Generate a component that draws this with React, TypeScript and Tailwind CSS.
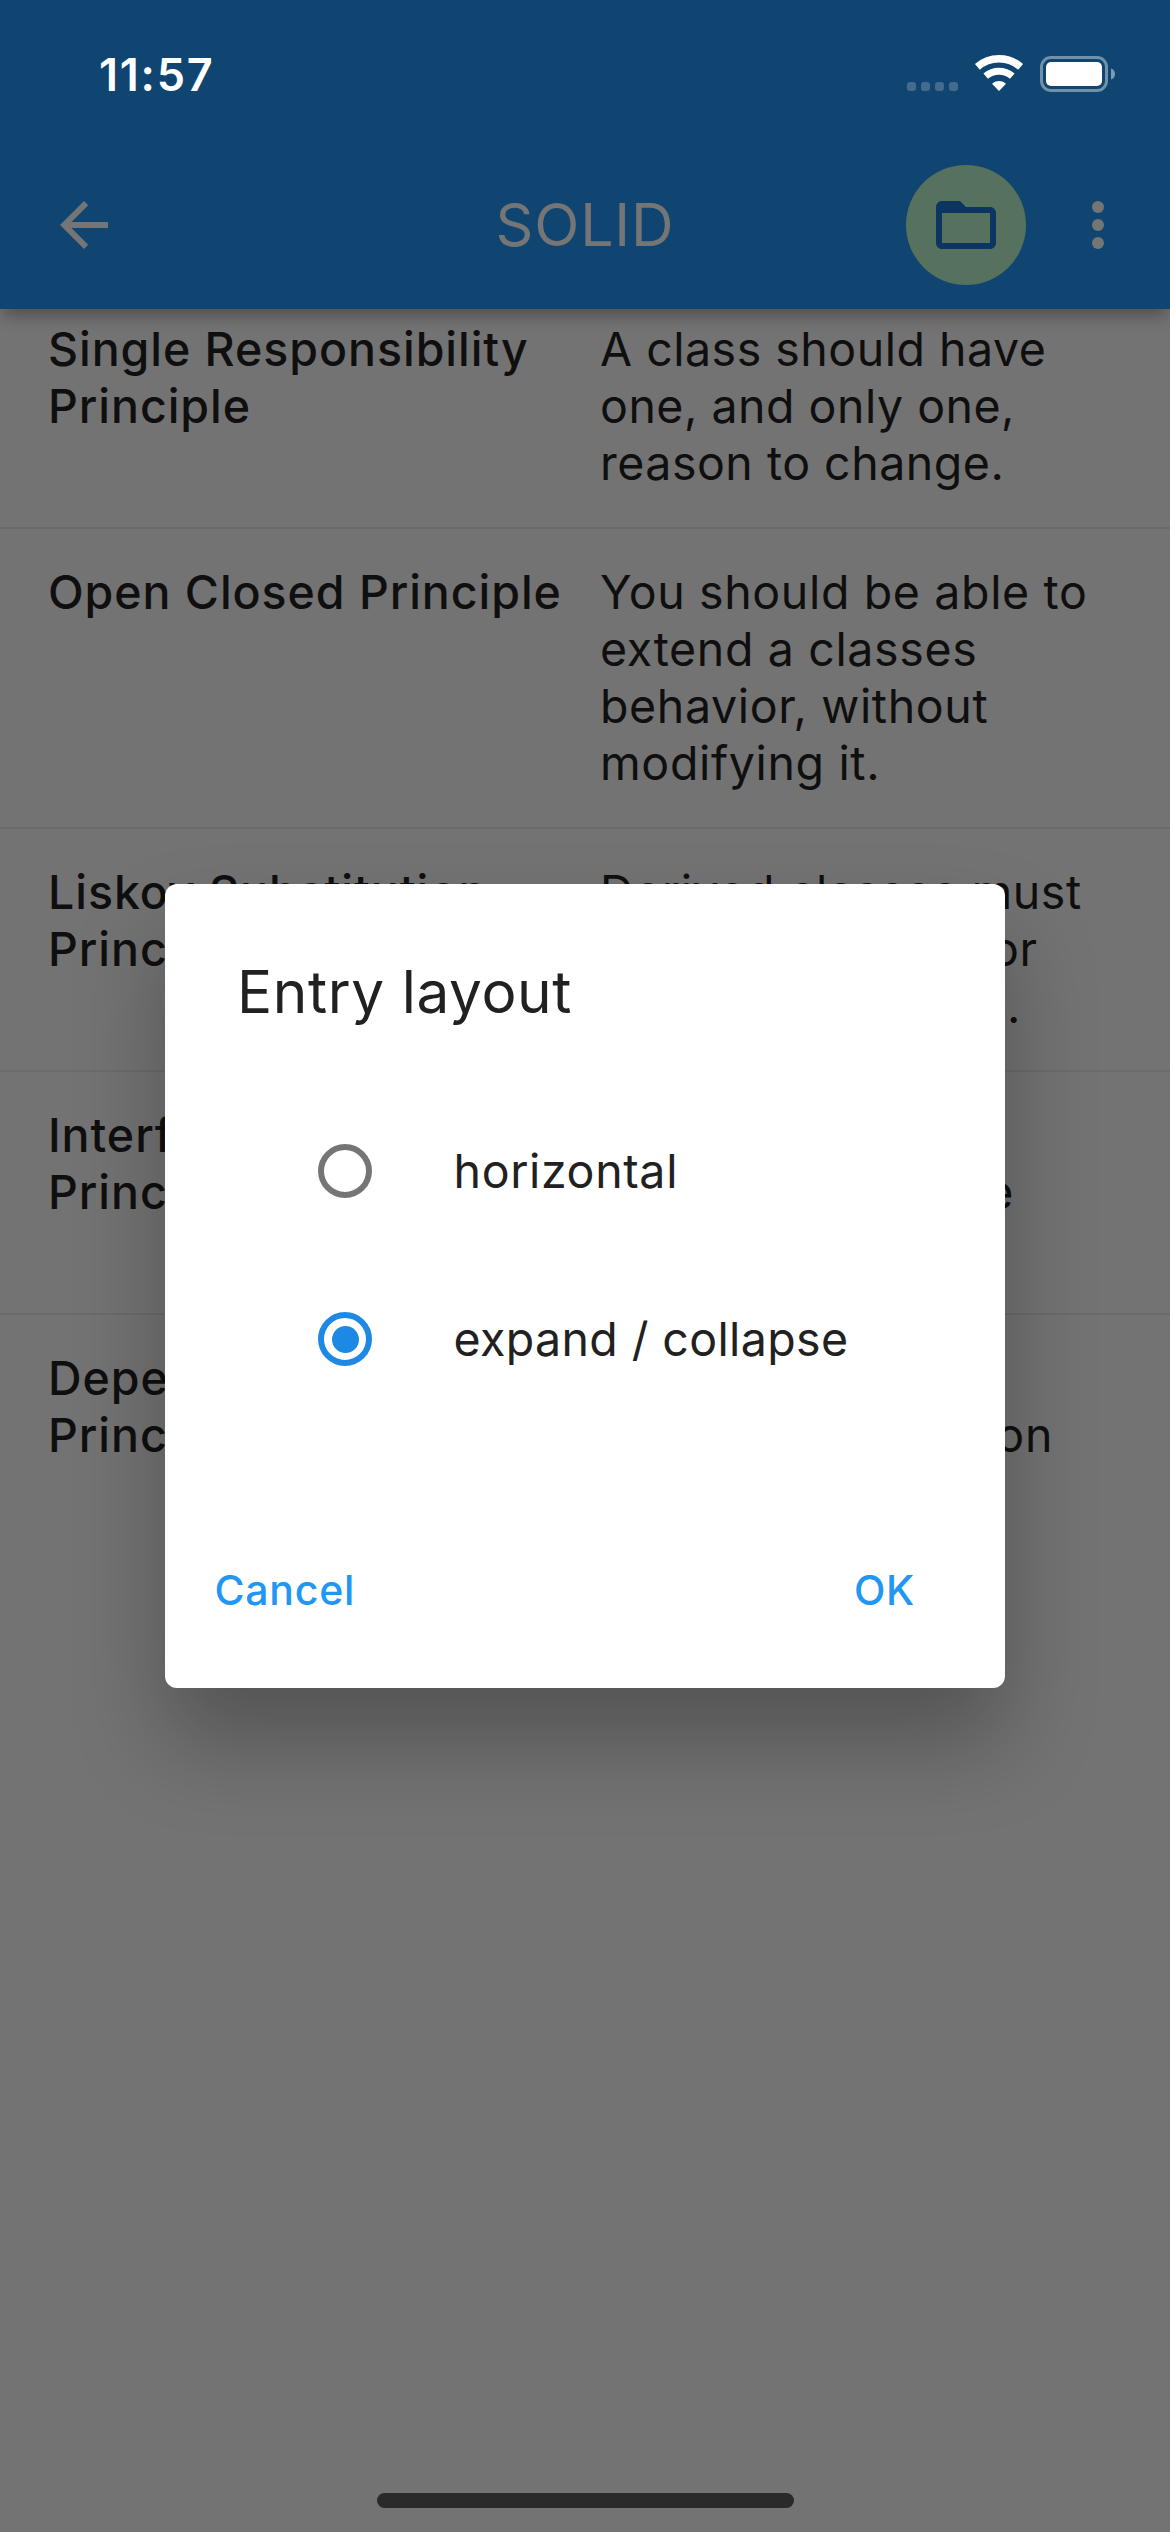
import React from "react";

type Entry = { term: string[]; text: string[]; tracking: string };

const entries: Entry[] = [
  {
    term: ["Single Responsibility", "Principle"],
    text: ["A class should have", "one, and only one,", "reason to change."],
    tracking: "tracking-[0.5px]",
  },
  {
    term: ["Open Closed Principle"],
    text: ["You should be able to", "extend a classes", "behavior, without", "modifying it."],
    tracking: "tracking-[0.64px]",
  },
  {
    term: ["Liskov Substitution", "Principle"],
    text: ["Derived classes must", "be substitutable for", "their base classes."],
    tracking: "tracking-[0.6px]",
  },
  {
    term: ["Interface Segregation", "Principle"],
    text: ["Make fine grained", "interfaces that are", "client specific."],
    tracking: "tracking-[0.75px]",
  },
  {
    term: ["Dependency Inversion", "Principle"],
    text: ["Depend on", "abstractions, not on", "concretions."],
    tracking: "tracking-[0.85px]",
  },
];

function StatusBar() {
  return (
    <div className="flex h-[141px] items-start justify-between pl-[99px] pr-[54px] pt-[52px] text-white">
      <span className="mt-px text-[45px] font-semibold leading-[44px] tracking-[1.77px]">11:57</span>
      <div className="flex h-[42px] items-center">
        <div className="mr-[17px] mt-[27px] flex gap-[5px]">
          {[0, 1, 2, 3].map((i) => (
            <span key={i} className="h-[9px] w-[9px] rounded-[3px] bg-[#426b8e]" />
          ))}
        </div>
        <svg className="mr-[17px] h-[36px] w-[48px] overflow-visible" viewBox="0 0 48 36" fill="none">
          <path d="M2.4 11.8A33 33 0 0 1 45.6 11.8" stroke="currentColor" strokeWidth="7.5" />
          <path d="M10.7 21.2A20.4 20.4 0 0 1 37.3 21.2" stroke="currentColor" strokeWidth="7" />
          <path
            d="M24 35L18 28.8A9.6 9.6 0 0 1 30 28.8Z"
            fill="currentColor"
            stroke="currentColor"
            strokeWidth="1.5"
            strokeLinejoin="round"
          />
        </svg>
        <svg className="mt-[2px] h-[36px] w-[76px]" viewBox="0 0 76 36" fill="none">
          <rect x="1.5" y="1.5" width="65" height="33" rx="9.5" stroke="#7190aa" strokeWidth="3" />
          <rect x="6" y="6" width="56" height="24" rx="5" fill="#fff" />
          <path d="M71 12.5C73.6 13.4 75 15.4 75 18S73.6 22.6 71 23.5Z" fill="#7f9bb2" />
        </svg>
      </div>
    </div>
  );
}

function AppBar() {
  return (
    <div className="flex h-[168px] items-center text-[#757575]">
      <div className="w-[264px] pl-[48px]">
        <svg className="h-[72px] w-[72px]" viewBox="0 0 24 24" fill="currentColor">
          <path d="M20 11H7.83l5.59-5.59L12 4l-8 8 8 8 1.41-1.41L7.83 13H20v-2z" />
        </svg>
      </div>
      <h1 className="flex-1 text-center text-[59px] leading-[70px] tracking-[0.83px]">SOLID</h1>
      <div className="flex w-[264px] items-center">
        <div className="flex h-[120px] w-[120px] items-center justify-center rounded-full bg-[#56715e]">
          <svg className="h-[72px] w-[72px]" viewBox="0 0 24 24" fill="#0c3661">
            <path d="M20 6h-8l-2-2H4c-1.1 0-1.99.9-1.99 2L2 18c0 1.1.9 2 2 2h16c1.1 0 2-.9 2-2V8c0-1.1-.9-2-2-2zm0 12H4V8h16v10z" />
          </svg>
        </div>
        <svg className="ml-[36px] h-[72px] w-[72px]" viewBox="0 0 24 24" fill="currentColor">
          <circle cx="12" cy="6" r="2" />
          <circle cx="12" cy="12" r="2" />
          <circle cx="12" cy="18" r="2" />
        </svg>
      </div>
    </div>
  );
}

function EntryRow({ entry, first }: { entry: Entry; first: boolean }) {
  return (
    <div
      className={
        "grid grid-cols-[522px_522px] gap-[30px] whitespace-nowrap pl-[48px] text-[46.5px] leading-[57px] " +
        (first ? "pb-[35px] pt-[12px]" : "border-t-2 border-[#6b6b6b] pb-[35px] pt-[35px]")
      }
    >
      <div className="font-medium tracking-[0.95px]">
        {entry.term.map((line) => (
          <div key={line}>{line}</div>
        ))}
      </div>
      <div className={entry.tracking}>
        {entry.text.map((line) => (
          <div key={line}>{line}</div>
        ))}
      </div>
    </div>
  );
}

function RadioOption({ label, checked, tracking }: { label: string; checked: boolean; tracking: string }) {
  return (
    <div className="flex h-[168px] items-center pl-[153px]">
      <div
        className={
          "flex h-[54px] w-[54px] items-center justify-center rounded-full border-[6px] " +
          (checked ? "border-[#1e88e5]" : "border-[#757575]")
        }
      >
        {checked && <div className="h-[27px] w-[27px] rounded-full bg-[#1e88e5]" />}
      </div>
      <span className={"ml-[81.5px] text-[46.5px] leading-[57px] " + tracking}>{label}</span>
    </div>
  );
}

function LayoutDialog() {
  return (
    <div className="absolute left-[165px] top-[883.5px] h-[804px] w-[840px] rounded-[12px] bg-white pt-[73.5px] text-[#212121] shadow-[0_54px_90px_0_rgba(0,0,0,0.27)]">
      <h2 className="pl-[72px] text-[58.5px] leading-[70px] tracking-[0.6px]">Entry layout</h2>
      <div className="pt-[60px]">
        <RadioOption label="horizontal" checked={false} tracking="tracking-[0.65px]" />
        <RadioOption label="expand / collapse" checked tracking="tracking-[0.38px]" />
      </div>
      <div className="flex justify-between pl-[49.5px] pr-[90px] pt-[142px] text-[41px] font-medium leading-[50px] tracking-[0.75px] text-[#2196f3]">
        <span>Cancel</span>
        <span>OK</span>
      </div>
    </div>
  );
}

export default function App() {
  return (
    <div className="relative flex h-[2532px] w-[1170px] flex-col overflow-hidden bg-[#737373] font-['Inter',sans-serif] text-[#0f0f0f]">
      <header className="relative z-10 h-[309px] bg-[#0f4570] shadow-[0_10px_15px_-3px_rgba(0,0,0,0.3)]">
        <StatusBar />
        <AppBar />
      </header>
      <main className="flex-1">
        {entries.map((entry, i) => (
          <EntryRow key={entry.term[0]} entry={entry} first={i === 0} />
        ))}
      </main>
      <div className="mb-[24px] h-[15px] w-[417px] self-center rounded-full bg-[#2a2a2a]" />
      <div className="absolute inset-0 z-20">
        <LayoutDialog />
      </div>
    </div>
  );
}
